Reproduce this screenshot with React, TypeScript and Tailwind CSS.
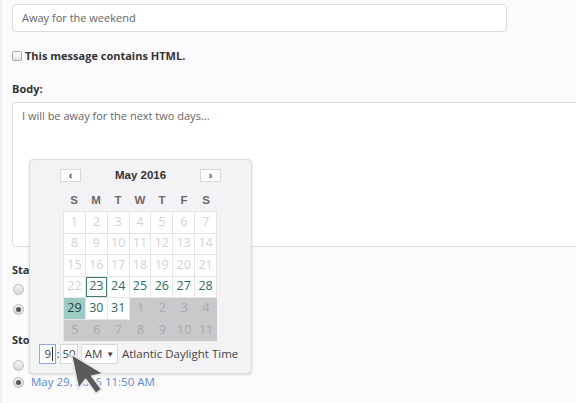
import React from 'react';

const font = { fontFamily: '"Open Sans", "Liberation Sans", sans-serif' };
const calFont = { fontFamily: '"Liberation Sans", Arial, sans-serif' };

type Cell = { n: number; kind: 'off' | 'today' | 'on' | 'sel' | 'next' };

const cells: Cell[] = [
  ...Array.from({ length: 22 }, (_, i) => ({ n: i + 1, kind: 'off' as const })),
  { n: 23, kind: 'today' },
  ...[24, 25, 26, 27, 28].map((n) => ({ n, kind: 'on' as const })),
  { n: 29, kind: 'sel' },
  { n: 30, kind: 'on' },
  { n: 31, kind: 'on' },
  ...[1, 2, 3, 4, 5, 6, 7, 8, 9, 10, 11].map((n) => ({ n, kind: 'next' as const })),
];

function DayCell({ n, kind }: Cell) {
  const base = 'h-[21.5px] flex items-center justify-center text-[12.5px]';
  if (kind === 'off')
    return <div className={`${base} bg-white border-r border-b border-[#e6e4e8] text-[#d4d2d6]`}>{n}</div>;
  if (kind === 'today')
    return (
      <div className={`${base} bg-white border-r border-b border-[#e6e4e8] text-[#2f6b63]`}>
        <div className="w-full h-full flex items-center justify-center border-[1.5px] border-[#3d7f73]">{n}</div>
      </div>
    );
  if (kind === 'on')
    return <div className={`${base} bg-white border-r border-b border-[#e6e4e8] text-[#2f6b63]`}>{n}</div>;
  if (kind === 'sel')
    return <div className={`${base} bg-[#9ccbc4] border-r border-b border-[#e6e4e8] text-[#24423e]`}>{n}</div>;
  return <div className={`${base} bg-[#c9c8ca] text-[#a9a8ab]`}>{n}</div>;
}

function Radio({ checked }: { checked?: boolean }) {
  return (
    <span className="w-[11px] h-[11px] shrink-0 rounded-full border border-[#b9b8bb] bg-gradient-to-b from-[#f4f4f4] to-[#d9d9d9] flex items-center justify-center">
      {checked && <span className="w-[5px] h-[5px] rounded-full bg-[#555]" />}
    </span>
  );
}

function Cursor() {
  return (
    <svg className="absolute left-[66px] top-[352px]" width="40" height="52" viewBox="0 0 40 52">
      <path
        d="M3 2 L3 38 L12 30 L19 46 L26 43 L19 28 L31 28 Z"
        fill="#5a5a5c"
        stroke="#e9e9ea"
        strokeWidth="2"
        strokeLinejoin="round"
        transform="rotate(-12 3 2)"
      />
    </svg>
  );
}

export default function App() {
  return (
    <div className="relative w-[576px] h-[403px] overflow-hidden bg-[#fbfafc] text-[#333] border-l-[2px] border-[#efeef0]" style={font}>
      <div className="pl-[10px] pt-1">
        <div className="w-[495px] h-[28px] bg-white border border-[#dcdbdd] rounded-[4px] flex items-center px-[9px] text-[11px] text-[#666]">
          Away for the weekend
        </div>
        <div className="mt-[17px] flex items-center gap-[3px] h-[14px]">
          <span className="w-[10px] h-[10px] border border-[#aaa] rounded-[2px] bg-gradient-to-b from-white to-[#e2e2e2]" />
          <span className="text-[11px] font-bold text-[#333]">This message contains HTML.</span>
        </div>
        <div className="mt-[17px] h-[18px] flex items-center text-[11px] font-bold">Body:</div>
        <div className="mt-[4px] w-[600px] h-[145px] bg-white border border-[#dcdbdd] rounded-[4px] px-[9px] py-[5px] text-[11px] text-[#666]">
          I will be away for the next two days...
        </div>
        <div className="mt-[14px] h-[18px] flex items-center text-[11px] font-bold">Start</div>
        <div className="mt-[5px] flex flex-col gap-[9px] pl-[1px]">
          <Radio />
          <Radio checked />
        </div>
        <div className="mt-[16px] h-[18px] flex items-center text-[11px] font-bold">Stop</div>
        <div className="mt-[11px] pl-[1px] flex">
          <Radio />
        </div>
        <div className="mt-[2px] flex items-center gap-[7px] pl-[1px] h-[18px]">
          <Radio checked />
          <span className="text-[11.5px] text-[#5b8ad3]">May 29, 2016 11:50 AM</span>
        </div>
      </div>

      <div className="absolute left-[27px] top-[159px] w-[223px] h-[215px] bg-[#f3f2f4] border border-[#dddcdf] rounded-[4px] shadow-sm">
        <div className="flex items-center justify-between h-[14px] pl-[30px] pr-[30px] mt-[8px]">
          <span className="w-[21px] h-[13px] bg-white border border-[#d8d7da] flex items-center justify-center text-[10px] font-bold text-[#555]">‹</span>
          <span className="text-[11.5px] font-bold text-[#333] leading-[14px]" style={calFont}>May 2016</span>
          <span className="w-[21px] h-[13px] bg-white border border-[#d8d7da] flex items-center justify-center text-[10px] font-bold text-[#555]">›</span>
        </div>
        <div
          className="ml-[33px] w-[154px] grid grid-cols-7 mt-[10px] text-[11.5px] leading-[16px] font-bold text-[#6a696c]"
          style={calFont}
        >
          {['S', 'M', 'T', 'W', 'T', 'F', 'S'].map((d, i) => (
            <div key={i} className="text-center">{d}</div>
          ))}
        </div>
        <div className="ml-[33px] mt-[3px] w-[154px] grid grid-cols-7 border-l border-t border-[#e6e4e8]">
          {cells.map((c, i) => (
            <DayCell key={i} {...c} />
          ))}
        </div>
        <div className="flex items-center whitespace-nowrap ml-[9px] mt-[3px] text-[11.5px] text-[#444]">
          <span className="w-[17px] h-[20px] bg-white border border-[#8fa9e6] flex items-center justify-end pr-[2px]">9<span className="w-px h-[14px] bg-[#333] ml-px" /></span>
          <span className="w-[4px] text-center">:</span>
          <span className="w-[18px] h-[20px] bg-white border border-[#d6d5d8] flex items-center justify-center">50</span>
          <span className="ml-[3px] w-[37px] h-[20px] bg-white border border-[#d6d5d8] rounded-[2px] flex items-center justify-center gap-[4px]">
            AM <span className="text-[8px]">▼</span>
          </span>
          <span className="ml-[4px] text-[#444]">Atlantic Daylight Time</span>
        </div>
      </div>
      <Cursor />
    </div>
  );
}
